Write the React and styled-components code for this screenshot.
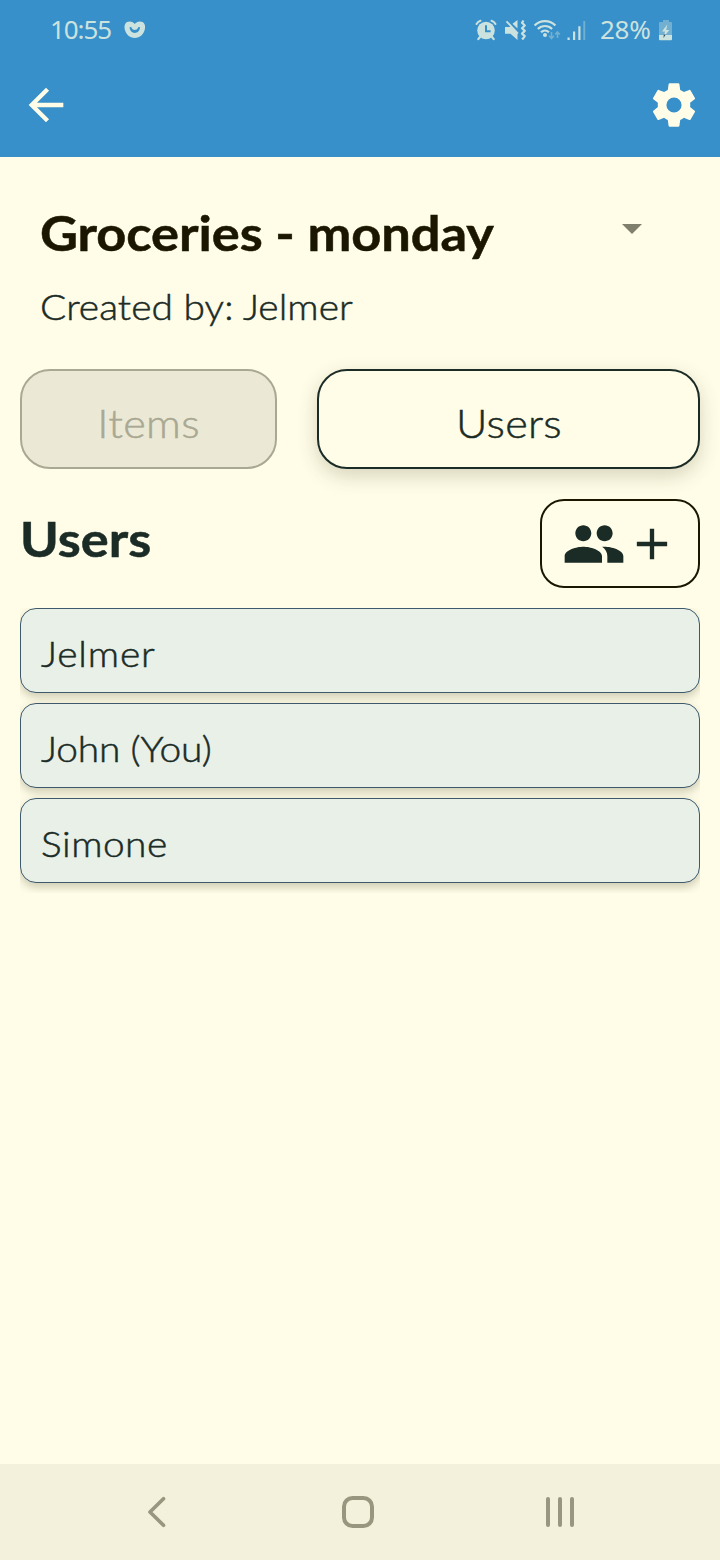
import React from "react";
import styled, { createGlobalStyle } from "styled-components";
import { MdArrowBack, MdPeople, MdAdd, MdArrowDropDown } from "react-icons/md";

const cream = "#fffde8";
const ink = "#1b2b26";
const blue = "#3790c9";
const statusInk = "#cbe2df";

const GlobalStyle = createGlobalStyle`
  * { box-sizing: border-box; }
  body { margin: 0; background: ${cream}; }
  svg { display: block; flex: none; }
`;

const Screen = styled.div`
  width: 720px;
  height: 1560px;
  display: flex;
  flex-direction: column;
  background: ${cream};
  color: ${ink};
  font-family: Lato, "Open Sans", sans-serif;
  font-weight: 300;
  overflow: hidden;
`;

const Header = styled.header`
  height: 157px;
  flex: none;
  background: ${blue};
  color: ${cream};
`;

const StatusBar = styled.div`
  height: 60px;
  padding: 0 47px 0 50px;
  display: flex;
  justify-content: space-between;
  align-items: center;
  color: ${statusInk};
  font-family: "Noto Sans", "Open Sans", sans-serif;
  font-size: 26px;
  font-weight: 400;
`;

const StatusGroup = styled.div`
  display: flex;
  align-items: center;
`;

const StatusText = styled.span`
  width: ${(p) => p.$width}px;
  padding: 0 0 2px ${(p) => p.$indent || 0}px;
  line-height: 58px;
  letter-spacing: ${(p) => p.$spacing || 0}px;
  white-space: nowrap;
`;

const Toolbar = styled.div`
  height: 90px;
  padding: 0 20px;
  display: flex;
  justify-content: space-between;
  align-items: center;
`;

const IconButton = styled.button`
  padding: 0;
  border: 0;
  background: none;
  color: inherit;
`;

/* Slightly widened lettering used for every label below the header. */
const Wide = styled.span`
  display: inline-block;
  transform: scaleX(1.08);
  transform-origin: ${(p) => (p.$centered ? "center" : "left")};
  letter-spacing: ${(p) => p.$spacing || 0}px;
  -webkit-text-stroke: 0.5px currentColor;
  white-space: nowrap;
`;

const Main = styled.main`
  flex: 1;
  padding: 45px 20px 0;
`;

const ListPicker = styled.div`
  height: 60px;
  padding: 0 44px 0 20px;
  display: flex;
  justify-content: space-between;
  align-items: flex-start;
  color: #1a1600;
  & > svg { margin-top: 2px; color: #807f6d; }
`;

const Title = styled.h1`
  margin: 0;
  font-size: 48.5px;
  line-height: 60px;
  font-weight: 700;
`;

const Author = styled.p`
  margin: 20px 0 0;
  padding-left: 20px;
  font-size: 36px;
  line-height: 48px;
`;

const Tabs = styled.div`
  margin-top: 39px;
  display: flex;
  gap: 40px;
`;

const Tab = styled.button`
  width: ${(p) => (p.$active ? 383 : 257)}px;
  height: 100px;
  padding: 8px 0 0;
  border: 2px solid ${(p) => (p.$active ? ink : "#a9a892")};
  border-radius: 30px;
  background: ${(p) => (p.$active ? cream : "#ebe9d5")};
  color: ${(p) => (p.$active ? ink : "#a9a892")};
  box-shadow: ${(p) => (p.$active ? "0 7px 20px rgba(60, 50, 20, 0.2)" : "none")};
  font: inherit;
  font-size: 40px;
`;

const SectionHead = styled.div`
  margin-top: 30px;
  height: 89px;
  display: flex;
  justify-content: space-between;
  align-items: flex-start;
`;

const SectionTitle = styled(Title).attrs({ as: "h2" })`
  padding-top: 9px;
`;

const AddUser = styled.button`
  width: 160px;
  height: 89px;
  padding: 0 0 0 20px;
  display: flex;
  align-items: center;
  border: 2px solid #1a1600;
  border-radius: 24px;
  background: ${cream};
  color: ${ink};
`;

const UserList = styled.ul`
  margin: 20px 0 0;
  padding: 0 0 10px;
  display: flex;
  flex-direction: column;
  gap: 10px;
  list-style: none;
  overflow: hidden;
`;

const UserRow = styled.li`
  height: 85px;
  padding: 5px 20px 0;
  display: flex;
  align-items: center;
  border: 1px solid #3e596b;
  border-radius: 16px;
  background: #e8f0e8;
  box-shadow: 0 4px 10px rgba(60, 50, 20, 0.25);
  font-size: 36px;
`;

const NavBar = styled.nav`
  height: 96px;
  flex: none;
  padding: 0 143px 0 140px;
  display: flex;
  justify-content: space-between;
  align-items: center;
  background: #f3f0dc;
  color: #99967f;
`;

const HeartIcon = () => (
  <svg width="22" height="18" viewBox="0 0 22 18">
    <path d="M10.800 3C9 .2 5.500-.2 3 1.100.6 2.500.2 5.500.7 8c.9 5 5 9 10.100 9s9.200-4 10.100-9c.5-2.500.1-5.500-2.300-6.900C16.100-.2 12.600.2 10.800 3z" fill={statusInk} />
    <path d="M5.600 6.500c.5 7.200 9.900 7.200 10.400 0-1-.8-1.900-.3-2.300.7-.6 2.300-5.200 2.300-5.800 0-.4-1-1.300-1.500-2.300-.7z" fill={blue} />
  </svg>
);

const StatusIcons = () => (
  <svg width="112" height="22" viewBox="475 18 112 22" fill={statusInk}>
    <g stroke={statusInk} fill="none" strokeLinecap="round">
      <path d="M476.500 23q1.300-2.400 4-3.300M491.500 19.700q2.700.9 4 3.300" strokeWidth="2" />
      <path d="M480 36l-1.700 2.200M492 36l1.700 2.200" strokeWidth="2.200" />
    </g>
    <circle cx="486" cy="29.500" r="8.800" />
    <path d="M486 24.300v6h4.600" fill="none" stroke={blue} strokeWidth="2" />
    <path d="M505 26h4.500l1.300-1 6.700 7v7l-7-6.200H505zM512.500 22.700l5-3.700v8.600z" />
    <path d="M506.500 20.300L518 32.500" stroke={statusInk} strokeWidth="1.800" />
    <path d="M523.500 19.500l-1.500 2.300 2.800 2.700-2.800 2.700 2.800 2.700-2.800 2.700 2.800 2.500-2.600 3.400" fill="none" stroke={statusInk} strokeWidth="2.200" strokeLinejoin="round" />
    <g fill="none" stroke={statusInk} strokeWidth="2.200">
      <path d="M534.600 24.500c5.500-5.900 15.300-5.900 20.800 0" />
      <path d="M537.900 28c4-4 10.200-4 14.200 0" />
      <path d="M541 31.200c2.400-2.300 5.600-2.300 8 0" />
    </g>
    <circle cx="545" cy="34" r="2" />
    <path d="M551.500 31v6.500m-2.400-2.800l2.400 2.800 2.400-2.800M557.500 37v-6m-2.300 2.600l2.300-2.700 2.300 2.700" fill="none" stroke={statusInk} strokeWidth="1.600" opacity=".4" />
    <path d="M567.500 36.500h2.200V39h-2.200zM573 30.500h2.200V39H573zM578.300 25.200h2.200V39h-2.200z" />
    <path d="M583.300 20h1.900v19h-1.900z" opacity=".4" />
  </svg>
);

const BatteryIcon = () => (
  <svg width="14" height="21" viewBox="0 0 14 21">
    <path d="M4 0h6v2h2a1 1 0 0 1 1 1v12H0V3a1 1 0 0 1 1-1h3z" fill={statusInk} opacity=".4" />
    <path d="M0 15h13v4.200a1 1 0 0 1-1 1H1a1 1 0 0 1-1-1z" fill={statusInk} />
    <path d="M8.300 4.500L3 11.500h3L4.700 17l5.600-7H7.200z" fill={statusInk} />
    <path d="M4.800 14.500h1.900L4.500 18z" fill="#284d5a" />
  </svg>
);

const CogIcon = () => (
  <svg width="52" height="52" viewBox="0 0 24 24" fill="currentColor">
    <path d="M12 15.500A3.500 3.500 0 0 1 8.500 12 3.500 3.500 0 0 1 12 8.500a3.500 3.500 0 0 1 3.500 3.500 3.500 3.500 0 0 1-3.500 3.500m7.430-2.530c.04-.32.07-.64.07-.97s-.03-.66-.07-1l2.110-1.630c.19-.15.24-.42.12-.64l-2-3.460c-.12-.22-.39-.31-.61-.22l-2.490 1c-.52-.39-1.060-.73-1.690-.98l-.37-2.650A.506.506 0 0 0 14 2h-4c-.25 0-.46.18-.5.42l-.37 2.650c-.63.25-1.170.59-1.690.98l-2.490-1c-.22-.09-.49 0-.61.22l-2 3.460c-.13.22-.07.49.12.64L4.570 11c-.04.34-.07.67-.07 1s.03.65.07.97l-2.110 1.660c-.19.15-.25.42-.12.64l2 3.460c.12.22.39.3.61.22l2.490-1.010c.52.4 1.060.74 1.690.99l.37 2.650c.04.24.25.42.5.42h4c.25 0 .46-.18.5-.42l.37-2.650c.63-.26 1.170-.59 1.690-.99l2.490 1.010c.22.08.49 0 .61-.22l2-3.460c.12-.22.07-.49-.12-.64z" />
  </svg>
);

const NavIcon = ({ children }) => (
  <svg width="34" height="34" viewBox="0 0 34 34" fill="none" stroke="currentColor" strokeWidth="4" strokeLinecap="round" strokeLinejoin="round">
    {children}
  </svg>
);

const users = [
  { name: "Jelmer", spacing: 0.8 },
  { name: "John (You)", spacing: -0.15 },
  { name: "Simone", spacing: 0.45 },
];

export default function App() {
  return (
    <Screen>
      <GlobalStyle />
      <Header>
        <StatusBar>
          <StatusGroup>
            <StatusText $width={74} $spacing={-1.1}>10:55</StatusText>
            <HeartIcon />
          </StatusGroup>
          <StatusGroup>
            <StatusIcons />
            <StatusText $width={72} $indent={13} $spacing={-0.3}>28%</StatusText>
            <BatteryIcon />
          </StatusGroup>
        </StatusBar>
        <Toolbar>
          <IconButton aria-label="Back"><MdArrowBack size={52} /></IconButton>
          <IconButton aria-label="Settings"><CogIcon /></IconButton>
        </Toolbar>
      </Header>
      <Main>
        <ListPicker>
          <Title><Wide $spacing={-0.05}>Groceries - monday</Wide></Title>
          <MdArrowDropDown size={48} />
        </ListPicker>
        <Author><Wide $spacing={0.05}>Created by: Jelmer</Wide></Author>
        <Tabs>
          <Tab><Wide $centered $spacing={0.3}>Items</Wide></Tab>
          <Tab $active><Wide $centered $spacing={0.2}>Users</Wide></Tab>
        </Tabs>
        <SectionHead>
          <SectionTitle><Wide>Users</Wide></SectionTitle>
          <AddUser aria-label="Add user">
            <MdPeople size={64} />
            <MdAdd size={52} />
          </AddUser>
        </SectionHead>
        <UserList>
          {users.map((user) => (
            <UserRow key={user.name}>
              <Wide $spacing={user.spacing}>{user.name}</Wide>
            </UserRow>
          ))}
        </UserList>
      </Main>
      <NavBar>
        <NavIcon><path d="M23.500 3.800L10 17l13.500 13.200" strokeWidth="3.700" /></NavIcon>
        <NavIcon><rect x="2" y="3" width="28" height="28" rx="8.500" /></NavIcon>
        <NavIcon><path d="M5 4v26M17 4v26M29 4v26" /></NavIcon>
      </NavBar>
    </Screen>
  );
}
